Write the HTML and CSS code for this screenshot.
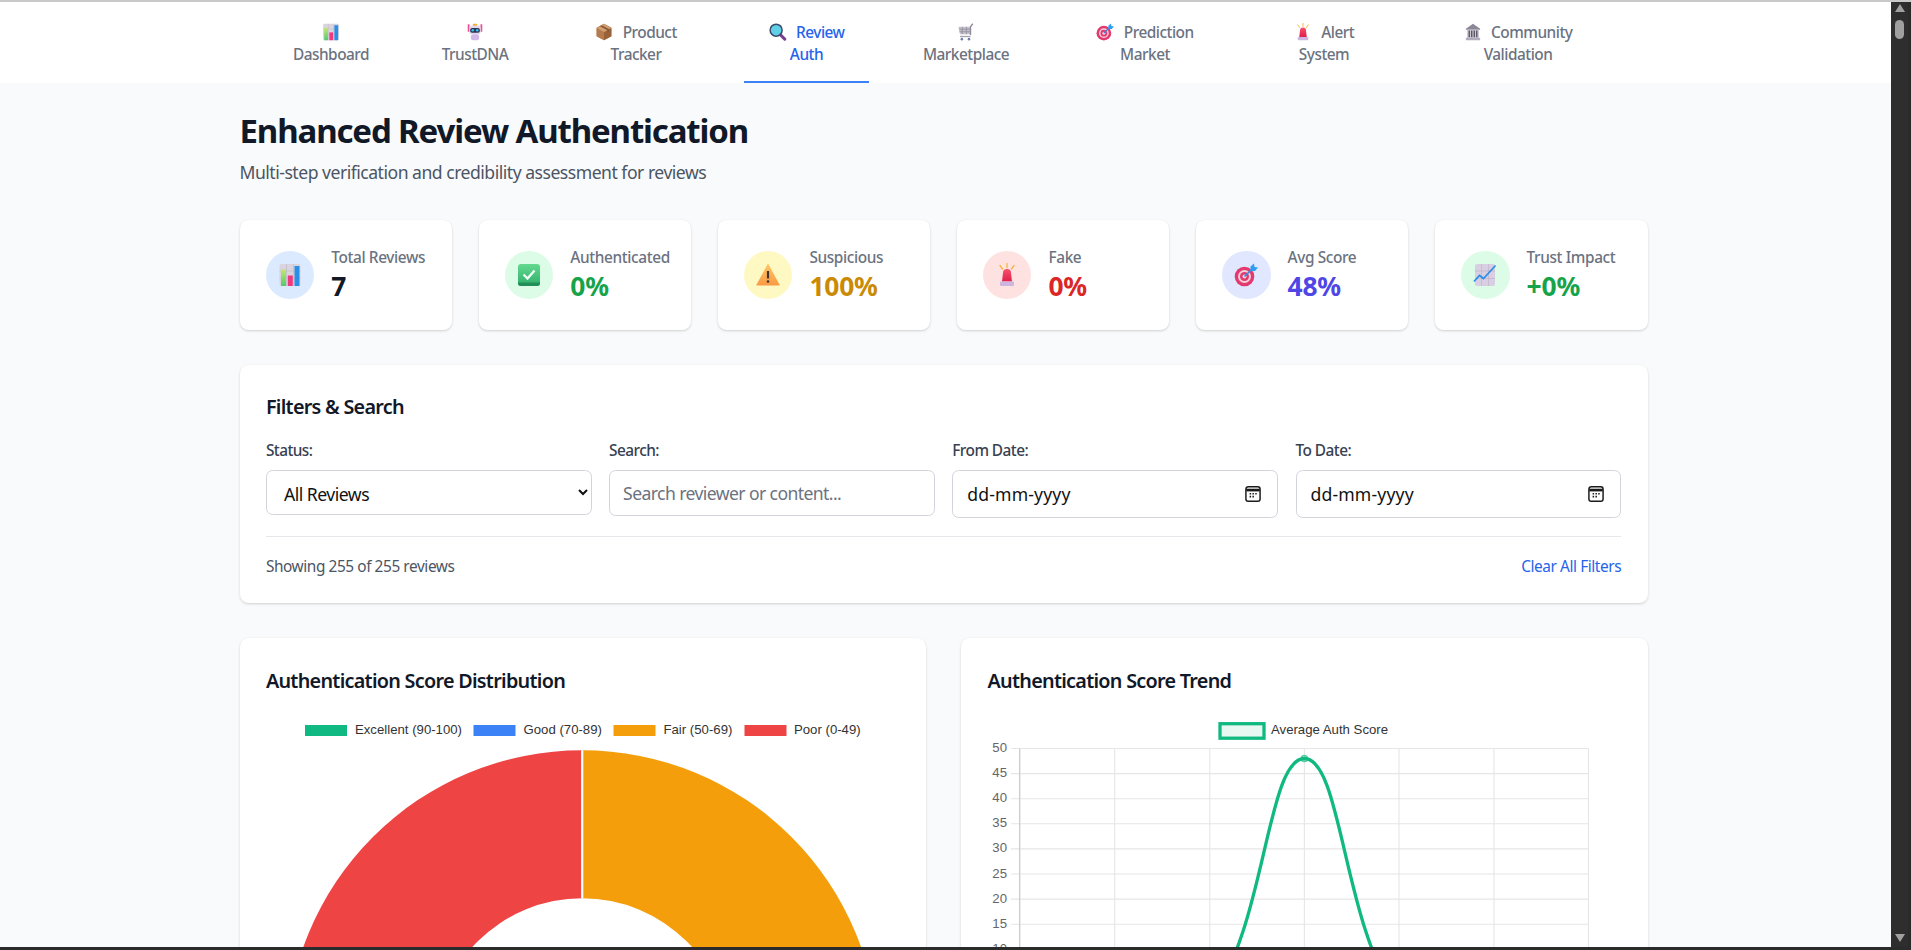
FILE: index.html
```html
<!DOCTYPE html>
<html lang="en">
<head>
<meta charset="utf-8">
<title>Enhanced Review Authentication</title>
<link rel="stylesheet" href="styles.css">
</head>
<body>
<svg class="defs" aria-hidden="true">
  <defs>
    <linearGradient id="gRed" x1="0" y1="0" x2="0" y2="1"><stop offset="0" stop-color="#f9516a"/><stop offset="1" stop-color="#e01f4d"/></linearGradient>
    <linearGradient id="gOrange" x1="0" y1="0" x2="0" y2="1"><stop offset="0" stop-color="#ffc466"/><stop offset="1" stop-color="#f99b45"/></linearGradient>
    <linearGradient id="gGreen" x1="0" y1="0" x2="0" y2="1"><stop offset="0" stop-color="#63d98f"/><stop offset="1" stop-color="#2fae6b"/></linearGradient>
    <linearGradient id="gBar" x1="0" y1="0" x2="0" y2="1"><stop offset="0" stop-color="#c4e86a"/><stop offset="1" stop-color="#52c96f"/></linearGradient>
    <symbol id="i-chart" viewBox="0 0 24 24">
      <rect x="1.500" y="1" width="21" height="22" rx="2" fill="#d9d4dd"/>
      <path d="M1.500 8h21M1.500 15h21M8.500 1v22M15.500 1v22" stroke="#c2bcc8" stroke-width=".7"/>
      <rect x="3" y="6.500" width="5" height="16.500" fill="url(#gBar)"/>
      <rect x="9.800" y="12.500" width="5" height="10.500" fill="#f0387f"/>
      <rect x="16.500" y="3" width="5" height="20" fill="#2a8fe6"/>
    </symbol>
    <symbol id="i-robot" viewBox="0 0 24 24">
      <path d="M3.500 1.500v10M20.500 1.500v10" stroke="#ee4f92" stroke-width="2.400"/>
      <rect x="9" y="1" width="6" height="3" rx="1" fill="#f2b23c"/>
      <rect x="4.500" y="3.500" width="15" height="11.500" rx="3.500" fill="#e3d6ee"/>
      <rect x="5.500" y="6.500" width="13" height="6.500" rx="2.800" fill="#2f3552"/>
      <circle cx="9" cy="9.700" r="1.700" fill="#35c3f0"/>
      <circle cx="15" cy="9.700" r="1.700" fill="#35c3f0"/>
      <rect x="6.500" y="15" width="11" height="8" rx="3" fill="#d3b9e8"/>
    </symbol>
    <symbol id="i-box" viewBox="0 0 24 24">
      <path d="M12 1.500 21.500 6.500v11L12 22.500 2.500 17.500v-11z" fill="#b57b4e" stroke="#b57b4e" stroke-width="1.200" stroke-linejoin="round"/>
      <path d="M12 12 21.500 6.500v11L12 22.500z" fill="#9a6239"/>
      <path d="M2.500 6.500 12 1.500l9.500 5L12 12z" fill="#d3a071"/>
      <path d="M6.500 4.300 16.500 9.500v3.500l2.500-1.400V8.200L9 3z" fill="#8a5a38"/>
    </symbol>
    <symbol id="i-lens" viewBox="0 0 24 24">
      <path d="M15 15.500 21 21.500" stroke="#7a3f8f" stroke-width="4" stroke-linecap="round"/>
      <circle cx="9.500" cy="9.500" r="8" fill="#5fd0e6" stroke="#3b4b6b" stroke-width="2"/>
    </symbol>
    <symbol id="i-cart" viewBox="0 0 24 24">
      <path d="M2 5h16v10H4z" fill="#c6c2cc"/>
      <path d="M2.500 8.300h15.500M3 11.700h15M7 5v10M12.500 5v10" stroke="#8f8a99" stroke-width="1"/>
      <path d="M18 16V5l3-4" fill="none" stroke="#8f8a99" stroke-width="1.800"/>
      <path d="M4 18h14" stroke="#a7a2ae" stroke-width="1.800"/>
      <circle cx="6.500" cy="21.500" r="1.700" fill="#6f7fa8"/><circle cx="16" cy="21.500" r="1.700" fill="#6f7fa8"/>
    </symbol>
    <symbol id="i-target" viewBox="0 0 24 24">
      <circle cx="10.500" cy="13.500" r="9.800" fill="#e23a6e"/>
      <circle cx="10.500" cy="13.500" r="6.500" fill="#f6cfdc"/>
      <circle cx="10.500" cy="13.500" r="4.500" fill="#e23a6e"/>
      <circle cx="10.500" cy="13.500" r="2" fill="#f6cfdc"/>
      <path d="M10.500 13.500 19 5" stroke="#2a8fe6" stroke-width="1.600"/>
      <path d="M16.500 3.500 20 .5l.5 3.500 3.500.5-3 3.500h-4.500z" fill="#2f9df0"/>
    </symbol>
    <symbol id="i-light" viewBox="0 0 24 24">
      <path d="M12 .5v4M5 2.500l2.500 3.500M19 2.500 16.500 6" stroke="#f5b53c" stroke-width="1.300" stroke-linecap="round"/>
      <path d="M7 18.500 8 10a4 4 0 0 1 8 0l1 8.500z" fill="url(#gRed)"/>
      <rect x="5" y="18.500" width="14" height="4.500" rx="1.200" fill="#cdb5e0"/>
    </symbol>
    <symbol id="i-bank" viewBox="0 0 24 24">
      <path d="M12 1 2.500 7.500v1.500h19V7.500z" fill="#8c8695"/>
      <rect x="4" y="9" width="16" height="11" fill="#cfcad6"/>
      <path d="M7 10v9M10.300 10v9M13.700 10v9M17 10v9" stroke="#57525f" stroke-width="1.800"/>
      <rect x="2.500" y="19.500" width="19" height="3.500" rx=".6" fill="#b3adbd"/>
    </symbol>
    <symbol id="i-check" viewBox="0 0 24 24">
      <rect x="1" y="1" width="22" height="22" rx="3" fill="url(#gGreen)"/>
      <path d="M1 19.500h22V20a3 3 0 0 1-3 3H4a3 3 0 0 1-3-3z" fill="#238f58"/>
      <path d="M6.500 11.500 10.500 15.500 17.500 7.500" fill="none" stroke="#f2fbf5" stroke-width="2.300"/>
    </symbol>
    <symbol id="i-warn" viewBox="0 0 24 24">
      <path d="M12 1.500 23 22H1z" fill="url(#gOrange)" stroke="url(#gOrange)" stroke-width="1.200" stroke-linejoin="round"/>
      <path d="M12 8v7.500" stroke="#40342c" stroke-width="2.200"/>
      <circle cx="12" cy="18.500" r="1.300" fill="#40342c"/>
    </symbol>
    <symbol id="i-trend" viewBox="0 0 24 24">
      <rect x="2" y="1" width="20" height="22" rx="2" fill="#d9cfe2"/>
      <path d="M2 8h20M2 15.500h20M8.500 1v22M15.500 1v22" stroke="#bfb3cb" stroke-width=".7"/>
      <path d="M1 18.500 6.500 12.500 10.500 15.500 22.500 2.500" fill="none" stroke="#2a8fe6" stroke-width="1.700"/>
    </symbol>
    <symbol id="i-cal" viewBox="0 0 16 16">
      <rect x="1.700" y="1.500" width="12.600" height="13" rx="2" fill="none" stroke="#1a1a1a" stroke-width="1.300"/>
      <path d="M2 4.500h12" stroke="#1a1a1a" stroke-width="2.400"/>
      <path d="M5 7.800h1.300M7.500 7.800h1.300M10 7.800h1.300M5 10.300h1.300M7.500 10.300h1.300" stroke="#1a1a1a" stroke-width="1.400"/>
    </symbol>
  </defs>
</svg>

<div class="window">
  <div class="page">
    <nav class="nav">
      <div class="tabs">
        <a class="tab"><svg class="nav-ico solo"><use href="#i-chart"/></svg><br>Dashboard</a>
        <a class="tab"><svg class="nav-ico solo"><use href="#i-robot"/></svg><br>TrustDNA</a>
        <a class="tab"><svg class="nav-ico"><use href="#i-box"/></svg> Product<br>Tracker</a>
        <a class="tab active"><svg class="nav-ico"><use href="#i-lens"/></svg> Review<br>Auth</a>
        <a class="tab"><svg class="nav-ico solo"><use href="#i-cart"/></svg><br>Marketplace</a>
        <a class="tab"><svg class="nav-ico"><use href="#i-target"/></svg> Prediction<br>Market</a>
        <a class="tab"><svg class="nav-ico"><use href="#i-light"/></svg> Alert<br>System</a>
        <a class="tab"><svg class="nav-ico"><use href="#i-bank"/></svg> Community<br>Validation</a>
      </div>
    </nav>

    <main class="main">
      <h1 class="title">Enhanced Review Authentication</h1>
      <p class="subtitle">Multi-step verification and credibility assessment for reviews</p>

      <section class="stats">
        <div class="card stat">
          <div class="stat-ico bg-blue"><svg class="big-ico"><use href="#i-chart"/></svg></div>
          <div class="stat-text"><div class="stat-label">Total Reviews</div><div class="stat-value c-dark">7</div></div>
        </div>
        <div class="card stat">
          <div class="stat-ico bg-green"><svg class="big-ico"><use href="#i-check"/></svg></div>
          <div class="stat-text"><div class="stat-label">Authenticated</div><div class="stat-value c-green">0%</div></div>
        </div>
        <div class="card stat">
          <div class="stat-ico bg-yellow"><svg class="big-ico"><use href="#i-warn"/></svg></div>
          <div class="stat-text"><div class="stat-label">Suspicious</div><div class="stat-value c-yellow">100%</div></div>
        </div>
        <div class="card stat">
          <div class="stat-ico bg-red"><svg class="big-ico"><use href="#i-light"/></svg></div>
          <div class="stat-text"><div class="stat-label">Fake</div><div class="stat-value c-red">0%</div></div>
        </div>
        <div class="card stat">
          <div class="stat-ico bg-indigo"><svg class="big-ico"><use href="#i-target"/></svg></div>
          <div class="stat-text"><div class="stat-label">Avg Score</div><div class="stat-value c-indigo">48%</div></div>
        </div>
        <div class="card stat">
          <div class="stat-ico bg-green"><svg class="big-ico"><use href="#i-trend"/></svg></div>
          <div class="stat-text"><div class="stat-label">Trust Impact</div><div class="stat-value c-green">+0%</div></div>
        </div>
      </section>

      <section class="card filters">
        <h3 class="card-title">Filters &amp; Search</h3>
        <div class="filter-grid">
          <div class="field">
            <label class="field-label">Status:</label>
            <select class="control select"><option>All Reviews</option></select>
          </div>
          <div class="field">
            <label class="field-label">Search:</label>
            <input class="control search" type="text" placeholder="Search reviewer or content...">
          </div>
          <div class="field">
            <label class="field-label">From Date:</label>
            <div class="control date"><span>dd-mm-yyyy</span><svg class="cal"><use href="#i-cal"/></svg></div>
          </div>
          <div class="field">
            <label class="field-label">To Date:</label>
            <div class="control date"><span>dd-mm-yyyy</span><svg class="cal"><use href="#i-cal"/></svg></div>
          </div>
        </div>
        <div class="filter-foot">
          <span class="showing">Showing 255 of 255 reviews</span>
          <a class="clear">Clear All Filters</a>
        </div>
      </section>

      <section class="charts">
        <div class="card chart-card">
          <h3 class="card-title">Authentication Score Distribution</h3>
          <svg class="chart" viewBox="0 0 633.600 640">
            <rect x="39" y="12" width="42" height="11" fill="#10b981"/>
            <text class="legend" x="89" y="21.500">Excellent (90-100)</text>
            <rect x="207.500" y="12" width="42" height="11" fill="#3b82f6"/>
            <text class="legend" x="257.500" y="21.500">Good (70-89)</text>
            <rect x="347.500" y="12" width="42" height="11" fill="#f59e0b"/>
            <text class="legend" x="397.500" y="21.500">Fair (50-69)</text>
            <rect x="478.500" y="12" width="42" height="11" fill="#ef4444"/>
            <text class="legend" x="528" y="21.500">Poor (0-49)</text>
            <path d="M316.200 37.200A296 296 0 0 1 316.200 629.200V481.200A148 148 0 0 0 316.200 185.200Z" fill="#f59e0b"/>
            <path d="M316.200 37.200A296 296 0 0 0 316.200 629.200V481.200A148 148 0 0 1 316.200 185.200Z" fill="#ef4444"/>
            <path d="M316.200 37.200V185.200" stroke="#fff" stroke-width="2.200"/>
          </svg>
        </div>
        <div class="card chart-card">
          <h3 class="card-title">Authentication Score Trend</h3>
          <svg class="chart" viewBox="0 0 633.600 640">
            <rect x="232" y="10.700" width="44" height="14.500" fill="#e7f8f2" stroke="#10b981" stroke-width="3.300"/>
            <text class="legend" x="283" y="21.500">Average Auth Score</text>
            <g class="grid">
              <path d="M31.700 35.500V300M126.700 35.500V300M221.800 35.500V300M316.400 35.500V300M411 35.500V300M506 35.500V300M600.500 35.500V300"/>
              <path d="M23 35.500H600.500M23 60.600H600.500M23 85.700H600.500M23 110.800H600.500M23 135.900H600.500M23 161H600.500M23 186.100H600.500M23 211.200H600.500M23 236.300H600.500"/>
            </g>
            <path d="M31.700 35.500V300" stroke="#c8c8c8" stroke-width="1.100"/>
            <text class="tick" x="19" y="39.500">50</text>
            <text class="tick" x="19" y="64.500">45</text>
            <text class="tick" x="19" y="89.500">40</text>
            <text class="tick" x="19" y="114.500">35</text>
            <text class="tick" x="19" y="139.500">30</text>
            <text class="tick" x="19" y="165">25</text>
            <text class="tick" x="19" y="190">20</text>
            <text class="tick" x="19" y="215">15</text>
            <text class="tick" x="19" y="240">10</text>
            <path d="M221.800 286.800C277.400 216.100 278.600 45.500 316.400 45.500C354.200 45.500 355.400 216.100 411 286.800" fill="none" stroke="#10b981" stroke-width="3.300"/>
            <circle cx="316.400" cy="45.500" r="3.300" fill="#10b981" fill-opacity=".5" stroke="#10b981" stroke-opacity=".6" stroke-width="1.100"/>
          </svg>
        </div>
      </section>
    </main>
  </div>
  <aside class="scrollbar">
    <div class="arrow-up"></div>
    <div class="thumb"></div>
    <div class="spring"></div>
    <div class="arrow-down"></div>
  </aside>
</div>
</body>
</html>
```
FILE: styles.css
```css
* { box-sizing: border-box; }
html, body { margin: 0; height: 950px; overflow: hidden; }
body {
  background: #2b2b2b;
  font-family: "Noto Sans", "Open Sans", sans-serif;
  color: #111827;
}
.defs { position: absolute; width: 0; height: 0; }
.window {
  display: flex;
  height: 947px;
  border-top: 2px solid #c9c9c9;
}
.page {
  width: 1891px;
  flex: none;
  background: #f9fafb;
  overflow: hidden;
}
/* nav */
.nav { background: #fff; height: 81px; }
.tabs {
  margin-left: 240px;
  display: grid;
  grid-template-columns: 182px 106px 216px 125px 194px 164px 194px 194px;
  justify-content: start;
}
.tab {
  display: block;
  height: 81px;
  padding-top: 19.5px;
  text-align: center;
  font-size: 15.4px;
  line-height: 22px;
  font-weight: 500;
  color: #6b7280;
  border-bottom: 2px solid transparent;
  letter-spacing: -.5px;
  white-space: nowrap;
}
.tab.active { color: #2563eb; border-bottom-color: #3b82f6; }
.nav-ico { width: 18px; height: 18px; vertical-align: -3px; margin-right: 6px; }
.nav-ico.solo { margin-right: 0; }

/* main */
.main { width: 1408px; margin-left: 239.5px; padding-top: 28.4px; }
.title { margin: 0; font-size: 33px; line-height: 39.6px; font-weight: 700; letter-spacing: -1.13px; }
.subtitle { margin: 7.8px 0 0; font-size: 17.6px; line-height: 26.4px; color: #4b5563; letter-spacing: -.5px; }

.card {
  background: #fff;
  border-radius: 8.8px;
  box-shadow: 0 1px 3px rgba(0,0,0,.12), 0 1px 2px rgba(0,0,0,.06);
}
.stats {
  display: grid;
  grid-template-columns: repeat(6, minmax(0, 1fr));
  gap: 26.4px;
  margin-top: 34.8px;
}
.stat { display: flex; align-items: center; padding: 26.4px; gap: 17px; height: 110px; }
.stat-text { padding-top: 1px; }
.stat-ico {
  width: 48.400px; height: 48.400px;
  flex: none;
  border-radius: 50%;
  display: flex; align-items: center; justify-content: center;
}
.big-ico { width: 24px; height: 24px; }
.stat-label { font-size: 15.4px; line-height: 22px; font-weight: 500; color: #6b7280; letter-spacing: -.38px; white-space: nowrap; }
.stat-value { font-size: 26.4px; line-height: 35.2px; font-weight: 700; letter-spacing: -.2px; }
.bg-blue { background: #dbeafe; }
.bg-green { background: #dcfce7; }
.bg-yellow { background: #fef9c3; }
.bg-red { background: #fee2e2; }
.bg-indigo { background: #e0e7ff; }
.c-dark { color: #111827; }
.c-green { color: #16a34a; }
.c-yellow { color: #ca8a04; }
.c-red { color: #dc2626; }
.c-indigo { color: #4f46e5; }

/* filters */
.filters { margin-top: 34.6px; padding: 27.4px 26.4px 0; height: 238px; }
.card-title { margin: 0; font-size: 19.8px; line-height: 30.8px; font-weight: 600; letter-spacing: -.72px; }
.filter-grid {
  display: grid;
  grid-template-columns: repeat(4, minmax(0, 1fr));
  gap: 17.6px;
  margin-top: 17.6px;
  height: 77px;
}
.field { display: flex; flex-direction: column; align-items: stretch; }
.field-label {
  font-size: 15.4px; line-height: 22px; font-weight: 500; color: #374151;
  letter-spacing: -.55px; margin-bottom: 7.8px;
}
.control {
  border: 1px solid #d1d5db;
  border-radius: 6.6px;
  background: #fff;
  font-family: inherit;
  width: 100%;
}
.select { height: 45px; font-size: 17.6px; color: #111; padding: 2px 0 0 13px; letter-spacing: -.5px; }
.search { height: 46px; font-size: 17.6px; padding: 0 14px 0 13px; letter-spacing: -.6px; color: #111; }
.search::placeholder { color: #6b7280; opacity: 1; }
.date {
  height: 48px;
  display: flex; align-items: center; justify-content: space-between;
  padding: 0 15px 0 14px;
  font-size: 17.6px;
  letter-spacing: .15px;
  color: #111;
}
.cal { width: 18px; height: 18px; }
.filter-foot {
  margin-top: 19px;
  border-top: 1px solid #e5e7eb;
  padding-top: 18.6px;
  display: flex; justify-content: space-between;
  font-size: 15.4px; line-height: 22px;
  letter-spacing: -.42px;
}
.showing { color: #4b5563; }
.clear { color: #2563eb; }

/* charts */
.charts {
  display: grid;
  grid-template-columns: repeat(2, minmax(0, 1fr));
  gap: 35.2px;
  margin-top: 35.2px;
}
.chart-card { padding: 28.4px 26.4px 26.4px; height: 760px; }
.chart { display: block; width: 633.600px; height: 640px; margin: 15.6px 0 0 .5px; }
.legend { font: 13.2px "Liberation Sans", Arial, sans-serif; fill: #333; }
.tick { font: 13.2px "Liberation Sans", Arial, sans-serif; fill: #666; text-anchor: end; }
.grid path { fill: none; stroke: #e6e6e6; stroke-width: 1.100; }

/* scrollbar */
.scrollbar {
  flex: 1;
  background: #2e2e2e;
  border-right: 3px solid #2a2a2a;
  display: flex; flex-direction: column; align-items: center;
  padding: 2px 0 5px;
}
.arrow-up { width: 0; height: 0; border: 5.500px solid transparent; border-top: 0; border-bottom: 8px solid #a0a0a0; }
.thumb { width: 9px; height: 19px; margin-top: 8px; border-radius: 5px; background: #9f9f9f; }
.spring { flex: 1; }
.arrow-down { width: 0; height: 0; border: 5.500px solid transparent; border-bottom: 0; border-top: 8px solid #a0a0a0; }
```
